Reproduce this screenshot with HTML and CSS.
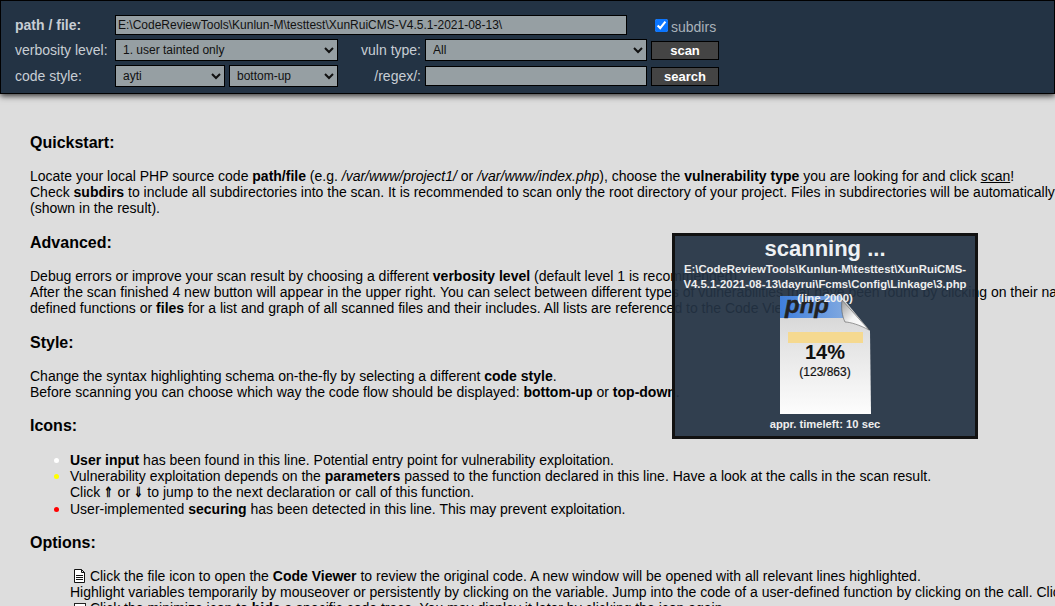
FILE: index.html
```html
<!DOCTYPE html>
<html lang="en">
<head>
<meta charset="utf-8">
<title>RIPS</title>
<link rel="stylesheet" href="styles.css">
</head>
<body>
<header class="menu">
  <form class="controls">
    <label class="lbl strong">path / file:</label>
    <input class="field path" type="text" value="E:\CodeReviewTools\Kunlun-M\testtest\XunRuiCMS-V4.5.1-2021-08-13\">
    <label class="subdirs"><input type="checkbox" checked>subdirs</label>

    <label class="lbl">verbosity level:</label>
    <select class="field"><option>1. user tainted only</option></select>
    <label class="lbl right">vuln type:</label>
    <select class="field"><option>All</option></select>
    <button class="btn" type="button">scan</button>

    <label class="lbl">code style:</label>
    <div class="pair">
      <select class="field"><option>ayti</option></select>
      <select class="field"><option>bottom-up</option></select>
    </div>
    <label class="lbl right">/regex/:</label>
    <input class="field regex" type="text">
    <button class="btn" type="button">search</button>
  </form>
</header>

<main class="doc">
  <h2 class="first">Quickstart:</h2>
  <p>Locate your local PHP source code <b>path/file</b> (e.g. <i>/var/www/project1/</i> or <i>/var/www/index.php</i>), choose the <b>vulnerability type</b> you are looking for and click <u>scan</u>!<br>
  Check <b>subdirs</b> to include all subdirectories into the scan. It is recommended to scan only the root directory of your project. Files in subdirectories will be automatically scanned by the scanner when included<br>
  (shown in the result).</p>

  <h2>Advanced:</h2>
  <p>Debug errors or improve your scan result by choosing a different <b>verbosity level</b> (default level 1 is recommended).<br>
  After the scan finished 4 new button will appear in the upper right. You can select between different types of vulnerabilities that have been found by clicking on their names in the stats window. Click on user-<br>
  defined functions or <b>files</b> for a list and graph of all scanned files and their includes. All lists are referenced to the Code Viewer.</p>

  <h2>Style:</h2>
  <p>Change the syntax highlighting schema on-the-fly by selecting a different <b>code style</b>.<br>
  Before scanning you can choose which way the code flow should be displayed: <b>bottom-up</b> or <b>top-down</b>.</p>

  <h2 class="icons-head">Icons:</h2>
  <ul class="icons">
    <li class="white"><b>User input</b> has been found in this line. Potential entry point for vulnerability exploitation.</li>
    <li class="yellow">Vulnerability exploitation depends on the <b>parameters</b> passed to the function declared in this line. Have a look at the calls in the scan result.<br>
    Click <b class="arrow">⇑</b> or <b class="arrow">⇓</b> to jump to the next declaration or call of this function.</li>
    <li class="red">User-implemented <b>securing</b> has been detected in this line. This may prevent exploitation.</li>
  </ul>

  <h2 class="opt">Options:</h2>
  <ul class="options">
    <li>
      <svg class="file-ico" width="11" height="14" viewBox="0 0 11 14"><path d="M.5.5h7l3 3v10h-10z M7.500.5v3h3" fill="#fff" stroke="#111"/><path d="M2 6.500h7M2 8.500h7M2 10.500h7" stroke="#111"/></svg>
      Click the file icon to open the <b>Code Viewer</b> to review the original code. A new window will be opened with all relevant lines highlighted.<br>
      Highlight variables temporarily by mouseover or persistently by clicking on the variable. Jump into the code of a user-defined function by clicking on the call. Click on
    </li>
    <li><span class="min-ico"></span> Click the minimize icon to <b>hide</b> a specific code trace. You may display it later by clicking the icon again.</li>
  </ul>
</main>

<aside class="scanning">
  <div class="title">scanning ...</div>
  <div class="cur">E:\CodeReviewTools\Kunlun-M\testtest\XunRuiCMS-<br>V4.5.1-2021-08-13\dayrui\Fcms\Config\Linkage\3.php<br>(line 2000)</div>
  <div class="page">
    <svg class="page-art" width="91" height="118" viewBox="0 0 91 118">
      <defs>
        <linearGradient id="sheet" x1="0" y1="0" x2="0" y2="1">
          <stop offset="0" stop-color="#cfcfcf"/>
          <stop offset=".45" stop-color="#e6e6e6"/>
          <stop offset="1" stop-color="#fdfdfd"/>
        </linearGradient>
        <linearGradient id="band" x1="0" y1="0" x2="1" y2="0">
          <stop offset="0" stop-color="#3f7fdc"/>
          <stop offset="1" stop-color="#7fa8e0"/>
        </linearGradient>
        <linearGradient id="fold" x1="0" y1="0" x2="1" y2="1">
          <stop offset="0" stop-color="#9a9a9a"/>
          <stop offset=".5" stop-color="#f4f4f4"/>
          <stop offset="1" stop-color="#fff"/>
        </linearGradient>
      </defs>
      <path d="M0 0H61L90 35L91 118H0Z" fill="url(#sheet)"/>
      <path d="M0 0H61L64 22H0Z" fill="url(#band)"/>
      <path d="M62 4L89 34C80 29 70 26 65 26C62 20 61 12 62 4Z" fill="url(#fold)" stroke="#5a5a5a" stroke-width=".6"/>
      <text x="5" y="17" class="php">php</text>
    </svg>
    <div class="bar"></div>
    <div class="pct">14%</div>
    <div class="cnt">(123/863)</div>
  </div>
  <div class="left">appr. timeleft: 10 sec</div>
</aside>
</body>
</html>
```
FILE: styles.css
```css
* { box-sizing: border-box; }
html, body { height: 100%; }
body {
  margin: 0;
  background: #dddddd;
  color: #000;
  font: 14px/16px "Liberation Sans", Arial, sans-serif;
  overflow: hidden;
  position: relative;
}
.menu {
  height: 94px;
  background: #233344;
  border: 1px solid #000;
  box-shadow: 0 2px 6px #333;
  color: #c8ced4;
}
.controls {
  display: grid;
  grid-template-columns: 100px 223px 87px 222px 72px;
  grid-template-rows: 20px 22px 22px;
  row-gap: 4px;
  padding: 14px 0 0 14px;
  align-items: center;
}
.controls > * { min-width: 0; }
.lbl { white-space: nowrap; }
.strong { font-weight: bold; }
.right { text-align: right; padding-right: 4px; }
.field {
  display: block;
  width: 100%;
  height: 100%;
  margin: 0;
  padding: 0 2px;
  background: #969fa3;
  border: 1px solid #000;
  border-radius: 0;
  color: #111;
  font: 12px "Liberation Sans", Arial, sans-serif;
}
select.field { padding-left: 3px; }
.path {
  grid-column: 2 / span 3;
  width: 512px;
}
.regex { height: 20px; }
.subdirs {
  grid-column: 5;
  display: flex;
  align-items: center;
  position: relative;
  top: 2px;
  margin-left: 8px;
  white-space: nowrap;
  width: 64px;
  color: #a9b2ba;
}
.subdirs input {
  margin: -3px 3px 0 0;
  width: 13px;
  height: 13px;
  accent-color: #0a75ff;
}
.pair {
  display: grid;
  grid-template-columns: 110px 109px;
  gap: 4px;
  height: 100%;
}
.btn {
  justify-self: end;
  width: 68px;
  height: 19px;
  padding: 0;
  background: #444;
  border: 1px solid #000;
  border-radius: 0;
  color: #fff;
  font: bold 13px "Liberation Sans", Arial, sans-serif;
}
.doc {
  padding: 0 0 0 30px;
  white-space: nowrap;
}
h2 {
  font-size: 16px;
  line-height: 18px;
  margin: 0;
  padding: 18px 0 16px;
}
h2.first { padding-top: 40px; }
h2.icons-head { padding: 17px 0 17px; }
h2.opt { padding: 17px 0 16px; }
p { margin: 0; }
ul { margin: 0; padding: 0 0 0 40px; }
.icons li { list-style: none; position: relative; }
.icons li::before {
  content: "";
  position: absolute;
  left: -16px;
  top: 6px;
  width: 5px;
  height: 5px;
  border-radius: 50%;
}
.white::before { background: #fff; }
.yellow::before { background: #ff0; }
.red::before { background: #f00; }
.icons .red { margin-top: 1px; }
.arrow {
  display: inline-block;
  width: 9.500px;
  line-height: 14px;
  transform: scaleX(.75);
  transform-origin: left center;
}
.options { list-style: none; }
.options li { list-style: none; }
.file-ico { vertical-align: -2px; margin: 0 1px 0 4px; }
.min-ico {
  display: inline-block;
  width: 12px;
  height: 12px;
  margin-left: 4px;
  background: #fff;
  border: 1px solid #222;
  vertical-align: -2px;
}
.scanning {
  position: absolute;
  left: 672px;
  top: 233px;
  width: 306px;
  height: 206px;
  background: rgba(35, 51, 68, .93);
  border: 3px solid #111;
  color: #eee;
  font-weight: bold;
  text-align: center;
  display: flex;
  flex-direction: column;
  align-items: center;
}
.title {
  font-size: 22px;
  line-height: 26px;
  color: #eef1f4;
}
.cur {
  font-size: 11.350px;
  line-height: 14.500px;
  white-space: nowrap;
  position: relative;
  z-index: 1;
}
.page {
  position: relative;
  width: 91px;
  height: 118px;
  margin-top: -9.500px;
  color: #111;
  display: flex;
  flex-direction: column;
  align-items: center;
}
.page-art { position: absolute; left: 0; top: 0; }
.php {
  font: italic bold 24px "Liberation Sans", Arial, sans-serif;
  fill: #222;
  stroke: #222;
  stroke-width: .4px;
}
.bar {
  position: relative;
  width: 75px;
  height: 11px;
  margin-top: 36px;
  background: #f5d990;
}
.pct {
  position: relative;
  font-size: 20px;
  line-height: 24px;
  margin-top: -3px;
}
.cnt {
  position: relative;
  font-size: 12px;
  line-height: 14px;
  margin-top: 1px;
  font-weight: normal;
  -webkit-text-stroke: .2px #111;
}
.left {
  font-size: 11.200px;
  line-height: 14px;
  margin-top: 3px;
}
```
